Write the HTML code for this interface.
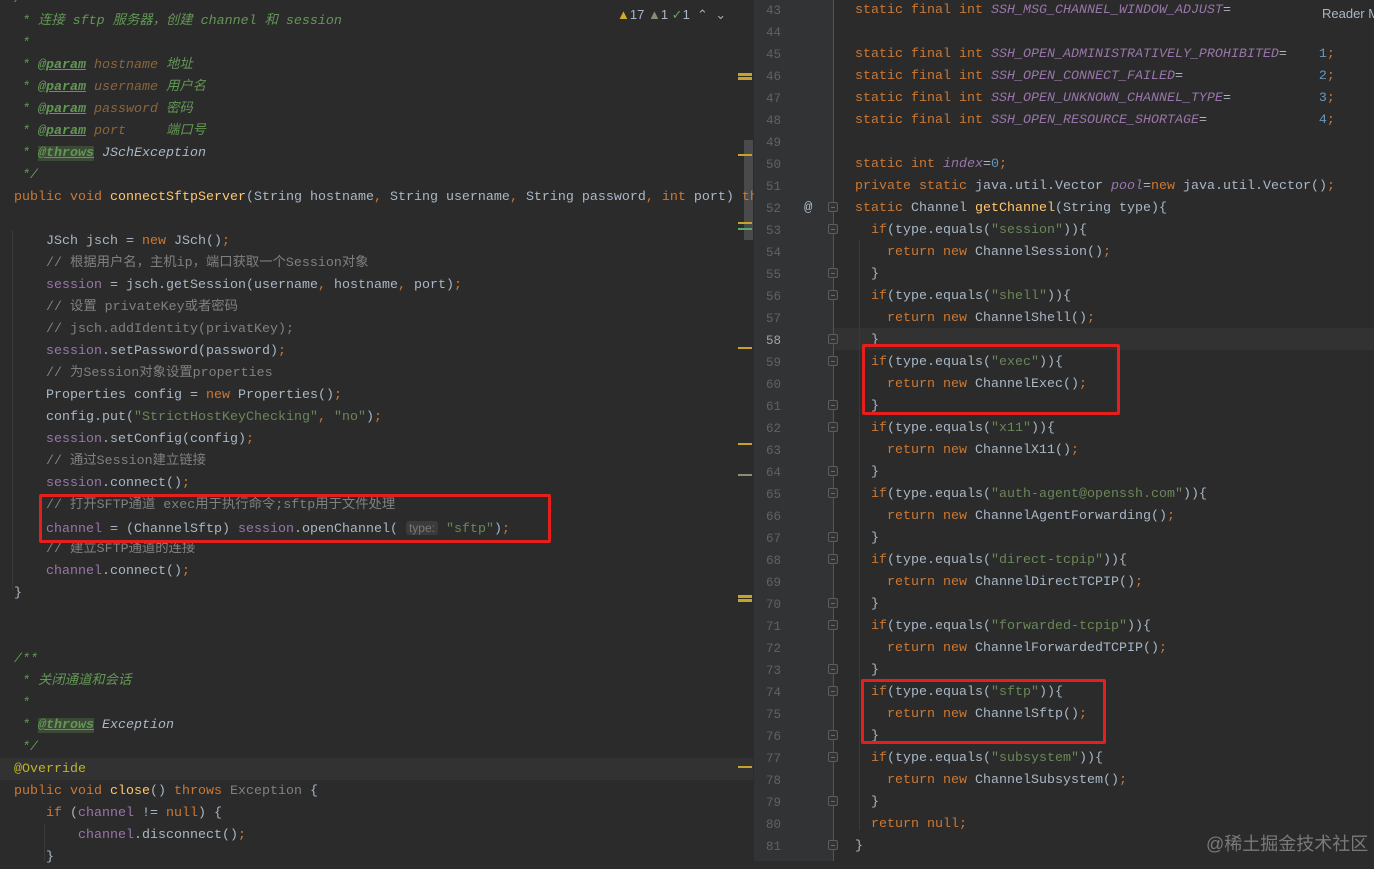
<!DOCTYPE html>
<html><head><meta charset="utf-8"><style>
*{margin:0;padding:0;box-sizing:border-box}
body{width:1374px;height:861px;overflow:hidden;background:#2b2b2b;font-family:"Liberation Mono","Noto Sans CJK SC",monospace;font-size:13.33px;color:#a9b7c6;position:relative}
.l{position:absolute;white-space:pre;height:22px;line-height:22px;margin-top:1px}
.k{color:#cc7832}.c{color:#808080}.d{color:#629755;font-style:italic}.s{color:#6a8759}.n{color:#6897bb}.f{color:#9876aa}.fi{color:#9876aa;font-style:italic}.m{color:#ffc66d}
.tg{color:#629755;font-weight:bold;text-decoration:underline;font-style:italic}
.tw{background:#3b4a34}
.pn{color:#a9b7c6;font-style:italic}
.pv{color:#8a653b;font-style:italic}
.an{color:#bbb529}
.hint{background:#3b3b3b;color:#787878;font-family:"Liberation Sans",sans-serif;font-size:12px;border-radius:3px;padding:0 3px}
#gut{position:absolute;left:754px;top:0;width:80px;height:861px;background:#313335}
.ln{position:absolute;left:755px;width:26px;text-align:right;color:#606366;height:22px;line-height:22px;font-size:12.5px;margin-top:1px}
.box{position:absolute;border:3px solid #e5201c;border-radius:2px}
.mk{position:absolute;left:738px;width:14px;height:3px;background:#c9a229}
.fold{position:absolute;left:828px;width:10px;height:10px;border:1px solid #5a5d60;border-radius:2px;background:#313335}
.fold:after{content:"";position:absolute;left:2px;top:4px;width:4px;height:1px;background:#6a6d70}
</style></head><body>
<div style="position:absolute;left:0;top:758px;width:753px;height:22px;background:#323232"></div>
<div style="position:absolute;left:744px;top:140px;width:9px;height:100px;background:#4a4a4a"></div>
<div style="position:absolute;left:12px;top:230px;width:1px;height:360px;background:#393939"></div>
<div style="position:absolute;left:44px;top:824px;width:1px;height:37px;background:#393939"></div>

<div class="l d" style="left:14px;top:-12px">/**</div>
<div class="l d" style="left:14px;top:10px"> * 连接 sftp 服务器，创建 channel 和 session</div>
<div class="l d" style="left:14px;top:32px"> *</div>
<div class="l d" style="left:14px;top:54px"> * <span class="tg">@param</span> <span class="pv">hostname</span> 地址</div>
<div class="l d" style="left:14px;top:76px"> * <span class="tg">@param</span> <span class="pv">username</span> 用户名</div>
<div class="l d" style="left:14px;top:98px"> * <span class="tg">@param</span> <span class="pv">password</span> 密码</div>
<div class="l d" style="left:14px;top:120px"> * <span class="tg">@param</span> <span class="pv">port</span>     端口号</div>
<div class="l d" style="left:14px;top:142px"> * <span class="tg tw">@throws</span> <span class="pn">JSchException</span></div>
<div class="l d" style="left:14px;top:164px"> */</div>
<div class="l" style="left:14px;top:186px"><span class="k">public void </span><span class="m">connectSftpServer</span>(String hostname<span class="k">, </span>String username<span class="k">, </span>String password<span class="k">, int </span>port) <span class="k">th</span></div>
<div class="l" style="left:14px;top:230px">    JSch jsch = <span class="k">new </span>JSch()<span class="k">;</span></div>
<div class="l c" style="left:14px;top:252px">    // 根据用户名，主机ip，端口获取一个Session对象</div>
<div class="l" style="left:14px;top:274px">    <span class="f">session</span> = jsch.getSession(username<span class="k">, </span>hostname<span class="k">, </span>port)<span class="k">;</span></div>
<div class="l c" style="left:14px;top:296px">    // 设置 privateKey或者密码</div>
<div class="l c" style="left:14px;top:318px">    // jsch.addIdentity(privatKey);</div>
<div class="l" style="left:14px;top:340px">    <span class="f">session</span>.setPassword(password)<span class="k">;</span></div>
<div class="l c" style="left:14px;top:362px">    // 为Session对象设置properties</div>
<div class="l" style="left:14px;top:384px">    Properties config = <span class="k">new </span>Properties()<span class="k">;</span></div>
<div class="l" style="left:14px;top:406px">    config.put(<span class="s">"StrictHostKeyChecking"</span><span class="k">, </span><span class="s">"no"</span>)<span class="k">;</span></div>
<div class="l" style="left:14px;top:428px">    <span class="f">session</span>.setConfig(config)<span class="k">;</span></div>
<div class="l c" style="left:14px;top:450px">    // 通过Session建立链接</div>
<div class="l" style="left:14px;top:472px">    <span class="f">session</span>.connect()<span class="k">;</span></div>
<div class="l c" style="left:14px;top:494px">    // 打开SFTP通道 exec用于执行命令;sftp用于文件处理</div>
<div class="l" style="left:14px;top:516px">    <span class="f">channel</span> = (ChannelSftp) <span class="f">session</span>.openChannel( <span class="hint">type:</span> <span class="s">"sftp"</span>)<span class="k">;</span></div>
<div class="l c" style="left:14px;top:538px">    // 建立SFTP通道的连接</div>
<div class="l" style="left:14px;top:560px">    <span class="f">channel</span>.connect()<span class="k">;</span></div>
<div class="l" style="left:14px;top:582px">}</div>
<div class="l d" style="left:14px;top:648px">/**</div>
<div class="l d" style="left:14px;top:670px"> * 关闭通道和会话</div>
<div class="l d" style="left:14px;top:692px"> *</div>
<div class="l d" style="left:14px;top:714px"> * <span class="tg tw">@throws</span> <span class="pn">Exception</span></div>
<div class="l d" style="left:14px;top:736px"> */</div>
<div class="l an" style="left:14px;top:758px">@Override</div>
<div class="l" style="left:14px;top:780px"><span class="k">public void </span><span class="m">close</span>() <span class="k">throws </span><span class="c">Exception</span> {</div>
<div class="l" style="left:14px;top:802px">    <span class="k">if </span>(<span class="f">channel</span> != <span class="k">null</span>) {</div>
<div class="l" style="left:14px;top:824px">        <span class="f">channel</span>.disconnect()<span class="k">;</span></div>
<div class="l" style="left:14px;top:846px">    }</div>

<div class="box" style="left:39px;top:494px;width:512px;height:49px"></div>

<div class="l" style="left:617px;top:3px;font-family:'Liberation Sans',sans-serif;font-size:13px;color:#a9b7c6"><span style="color:#d7a929">▲</span>17 <span style="color:#8a8a7a">▲</span>1 <span style="color:#59a869">✓</span>1 &nbsp;<span style="color:#aaa">⌃</span> &nbsp;<span style="color:#aaa">⌄</span></div>

<div class="mk" style="top:73px"></div><div class="mk" style="top:77px"></div>
<div class="mk" style="top:154px;height:2px"></div>
<div class="mk" style="top:222px;height:2px"></div>
<div class="mk" style="top:228px;height:2px;background:#59a869"></div>
<div class="mk" style="top:347px;height:2px"></div>
<div class="mk" style="top:443px;height:2px"></div>
<div class="mk" style="top:474px;height:2px;background:#8c8c78"></div>
<div class="mk" style="top:595px"></div><div class="mk" style="top:599px"></div>
<div class="mk" style="top:766px;height:2px"></div>

<div id="gut"></div>
<div style="position:absolute;left:834px;top:328px;width:540px;height:22px;background:#323232"></div>
<div style="position:absolute;left:833px;top:0;width:1px;height:861px;background:#555"></div>
<div style="position:absolute;left:859px;top:240px;width:1px;height:590px;background:#393939"></div>

<div class="ln" style="top:-1px">43</div><div class="ln" style="top:21px">44</div><div class="ln" style="top:43px">45</div><div class="ln" style="top:65px">46</div><div class="ln" style="top:87px">47</div><div class="ln" style="top:109px">48</div><div class="ln" style="top:131px">49</div><div class="ln" style="top:153px">50</div><div class="ln" style="top:175px">51</div><div class="ln" style="top:197px">52</div><div class="ln" style="top:219px">53</div><div class="ln" style="top:241px">54</div><div class="ln" style="top:263px">55</div><div class="ln" style="top:285px">56</div><div class="ln" style="top:307px">57</div><div class="ln" style="top:329px;color:#a4a3a3">58</div><div class="ln" style="top:351px">59</div><div class="ln" style="top:373px">60</div><div class="ln" style="top:395px">61</div><div class="ln" style="top:417px">62</div><div class="ln" style="top:439px">63</div><div class="ln" style="top:461px">64</div><div class="ln" style="top:483px">65</div><div class="ln" style="top:505px">66</div><div class="ln" style="top:527px">67</div><div class="ln" style="top:549px">68</div><div class="ln" style="top:571px">69</div><div class="ln" style="top:593px">70</div><div class="ln" style="top:615px">71</div><div class="ln" style="top:637px">72</div><div class="ln" style="top:659px">73</div><div class="ln" style="top:681px">74</div><div class="ln" style="top:703px">75</div><div class="ln" style="top:725px">76</div><div class="ln" style="top:747px">77</div><div class="ln" style="top:769px">78</div><div class="ln" style="top:791px">79</div><div class="ln" style="top:813px">80</div><div class="ln" style="top:835px">81</div>

<div class="l" style="left:804px;top:196px;color:#a9b7c6;font-size:14px">@</div>
<div class="fold" style="top:202px"></div><div class="fold" style="top:224px"></div><div class="fold" style="top:268px"></div><div class="fold" style="top:290px"></div><div class="fold" style="top:334px"></div><div class="fold" style="top:356px"></div><div class="fold" style="top:400px"></div><div class="fold" style="top:422px"></div><div class="fold" style="top:466px"></div><div class="fold" style="top:488px"></div><div class="fold" style="top:532px"></div><div class="fold" style="top:554px"></div><div class="fold" style="top:598px"></div><div class="fold" style="top:620px"></div><div class="fold" style="top:664px"></div><div class="fold" style="top:686px"></div><div class="fold" style="top:730px"></div><div class="fold" style="top:752px"></div><div class="fold" style="top:796px"></div><div class="fold" style="top:840px"></div>

<div class="l" style="left:855px;top:-1px"><span class="k">static final int </span><span class="fi">SSH_MSG_CHANNEL_WINDOW_ADJUST</span>=</div>
<div class="l" style="left:855px;top:43px"><span class="k">static final int </span><span class="fi">SSH_OPEN_ADMINISTRATIVELY_PROHIBITED</span>=    <span class="n">1</span><span class="k">;</span></div>
<div class="l" style="left:855px;top:65px"><span class="k">static final int </span><span class="fi">SSH_OPEN_CONNECT_FAILED</span>=                 <span class="n">2</span><span class="k">;</span></div>
<div class="l" style="left:855px;top:87px"><span class="k">static final int </span><span class="fi">SSH_OPEN_UNKNOWN_CHANNEL_TYPE</span>=           <span class="n">3</span><span class="k">;</span></div>
<div class="l" style="left:855px;top:109px"><span class="k">static final int </span><span class="fi">SSH_OPEN_RESOURCE_SHORTAGE</span>=              <span class="n">4</span><span class="k">;</span></div>
<div class="l" style="left:855px;top:153px"><span class="k">static int </span><span class="fi">index</span>=<span class="n">0</span><span class="k">;</span></div>
<div class="l" style="left:855px;top:175px"><span class="k">private static </span>java.util.Vector <span class="fi">pool</span>=<span class="k">new </span>java.util.Vector()<span class="k">;</span></div>
<div class="l" style="left:855px;top:197px"><span class="k">static </span>Channel <span class="m">getChannel</span>(String type){</div>
<div class="l" style="left:855px;top:219px">  <span class="k">if</span>(type.equals(<span class="s">"session"</span>)){</div>
<div class="l" style="left:855px;top:241px">    <span class="k">return new </span>ChannelSession()<span class="k">;</span></div>
<div class="l" style="left:855px;top:263px">  }</div>
<div class="l" style="left:855px;top:285px">  <span class="k">if</span>(type.equals(<span class="s">"shell"</span>)){</div>
<div class="l" style="left:855px;top:307px">    <span class="k">return new </span>ChannelShell()<span class="k">;</span></div>
<div class="l" style="left:855px;top:329px">  }</div>
<div class="l" style="left:855px;top:351px">  <span class="k">if</span>(type.equals(<span class="s">"exec"</span>)){</div>
<div class="l" style="left:855px;top:373px">    <span class="k">return new </span>ChannelExec()<span class="k">;</span></div>
<div class="l" style="left:855px;top:395px">  }</div>
<div class="l" style="left:855px;top:417px">  <span class="k">if</span>(type.equals(<span class="s">"x11"</span>)){</div>
<div class="l" style="left:855px;top:439px">    <span class="k">return new </span>ChannelX11()<span class="k">;</span></div>
<div class="l" style="left:855px;top:461px">  }</div>
<div class="l" style="left:855px;top:483px">  <span class="k">if</span>(type.equals(<span class="s">"auth-agent@openssh.com"</span>)){</div>
<div class="l" style="left:855px;top:505px">    <span class="k">return new </span>ChannelAgentForwarding()<span class="k">;</span></div>
<div class="l" style="left:855px;top:527px">  }</div>
<div class="l" style="left:855px;top:549px">  <span class="k">if</span>(type.equals(<span class="s">"direct-tcpip"</span>)){</div>
<div class="l" style="left:855px;top:571px">    <span class="k">return new </span>ChannelDirectTCPIP()<span class="k">;</span></div>
<div class="l" style="left:855px;top:593px">  }</div>
<div class="l" style="left:855px;top:615px">  <span class="k">if</span>(type.equals(<span class="s">"forwarded-tcpip"</span>)){</div>
<div class="l" style="left:855px;top:637px">    <span class="k">return new </span>ChannelForwardedTCPIP()<span class="k">;</span></div>
<div class="l" style="left:855px;top:659px">  }</div>
<div class="l" style="left:855px;top:681px">  <span class="k">if</span>(type.equals(<span class="s">"sftp"</span>)){</div>
<div class="l" style="left:855px;top:703px">    <span class="k">return new </span>ChannelSftp()<span class="k">;</span></div>
<div class="l" style="left:855px;top:725px">  }</div>
<div class="l" style="left:855px;top:747px">  <span class="k">if</span>(type.equals(<span class="s">"subsystem"</span>)){</div>
<div class="l" style="left:855px;top:769px">    <span class="k">return new </span>ChannelSubsystem()<span class="k">;</span></div>
<div class="l" style="left:855px;top:791px">  }</div>
<div class="l" style="left:855px;top:813px">  <span class="k">return null;</span></div>
<div class="l" style="left:855px;top:835px">}</div>

<div class="box" style="left:862px;top:344px;width:258px;height:71px"></div>
<div class="box" style="left:861px;top:679px;width:245px;height:65px"></div>

<div class="l" style="left:1322px;top:2px;font-family:'Liberation Sans',sans-serif;font-size:13px;color:#a9b7c6">Reader M</div>
<div class="l" style="left:1206px;top:832px;font-family:'Liberation Sans','Noto Sans CJK SC',sans-serif;font-size:18px;color:#7a7a7a">@稀土掘金技术社区</div>
</body></html>
